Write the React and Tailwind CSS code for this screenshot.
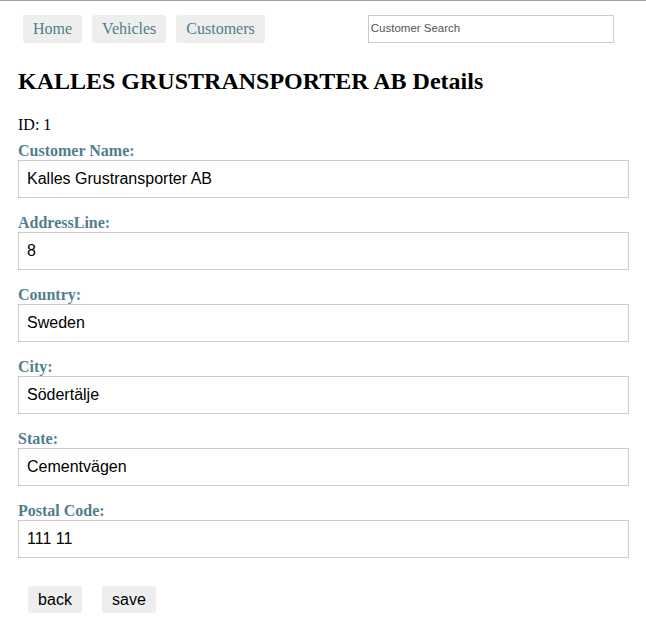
export default function App() {
  const fields = [
    ["Customer Name:", "Kalles Grustransporter AB"],
    ["AddressLine:", "8"],
    ["Country:", "Sweden"],
    ["City:", "Södertälje"],
    ["State:", "Cementvägen"],
    ["Postal Code:", "111 11"],
  ];
  const serif = { fontFamily: '"Liberation Serif", "Times New Roman", serif' };
  return (
    <div className="w-[646px] min-h-[635px] bg-white border-t border-[#a0a0a0]" style={serif}>
      <div className="flex items-center pt-[13px] pl-[23px] h-[42px]">
        <div className="flex gap-[10px]">
          {["Home", "Vehicles", "Customers"].map((t) => (
            <span key={t} className="h-[28px] px-[10px] flex items-center bg-[#eeeeee] rounded-[3px] text-[16px] text-[#527d8c]">
              {t}
            </span>
          ))}
        </div>
        <div className="ml-[103px] w-[246px] h-[28px] border border-[#cccccc] flex items-center px-[2px] text-[11.5px] text-[#555555] font-['Liberation_Sans',Arial,sans-serif]">
          Customer Search
        </div>
      </div>
      <div className="pl-[18px] pr-[17px]">
        <h2 className="mt-[24px] text-[24px] font-bold leading-[28px] text-black">KALLES GRUSTRANSPORTER AB Details</h2>
        <div className="mt-[21px] text-[16px] leading-[18px] text-black">ID: 1</div>
        {fields.map(([l, v], i) => (
          <div key={l} className={i === 0 ? "mt-[8px]" : "mt-[16px]"}>
            <div className="text-[16px] font-bold leading-[18px] text-[#527d8c]">{l}</div>
            <div className="h-[38px] border border-[#cccccc] flex items-center px-[8px] text-[16px] text-black font-['Liberation_Sans',Arial,sans-serif]">
              {v}
            </div>
          </div>
        ))}
        <div className="flex gap-[20px] pl-[10px] mt-[28px] font-['Liberation_Sans',Arial,sans-serif]">
          {["back", "save"].map((t) => (
            <span key={t} className="w-[54px] h-[27px] flex items-center justify-center bg-[#eeeeee] rounded-[3px] text-[16px] text-black">
              {t}
            </span>
          ))}
        </div>
      </div>
    </div>
  );
}
